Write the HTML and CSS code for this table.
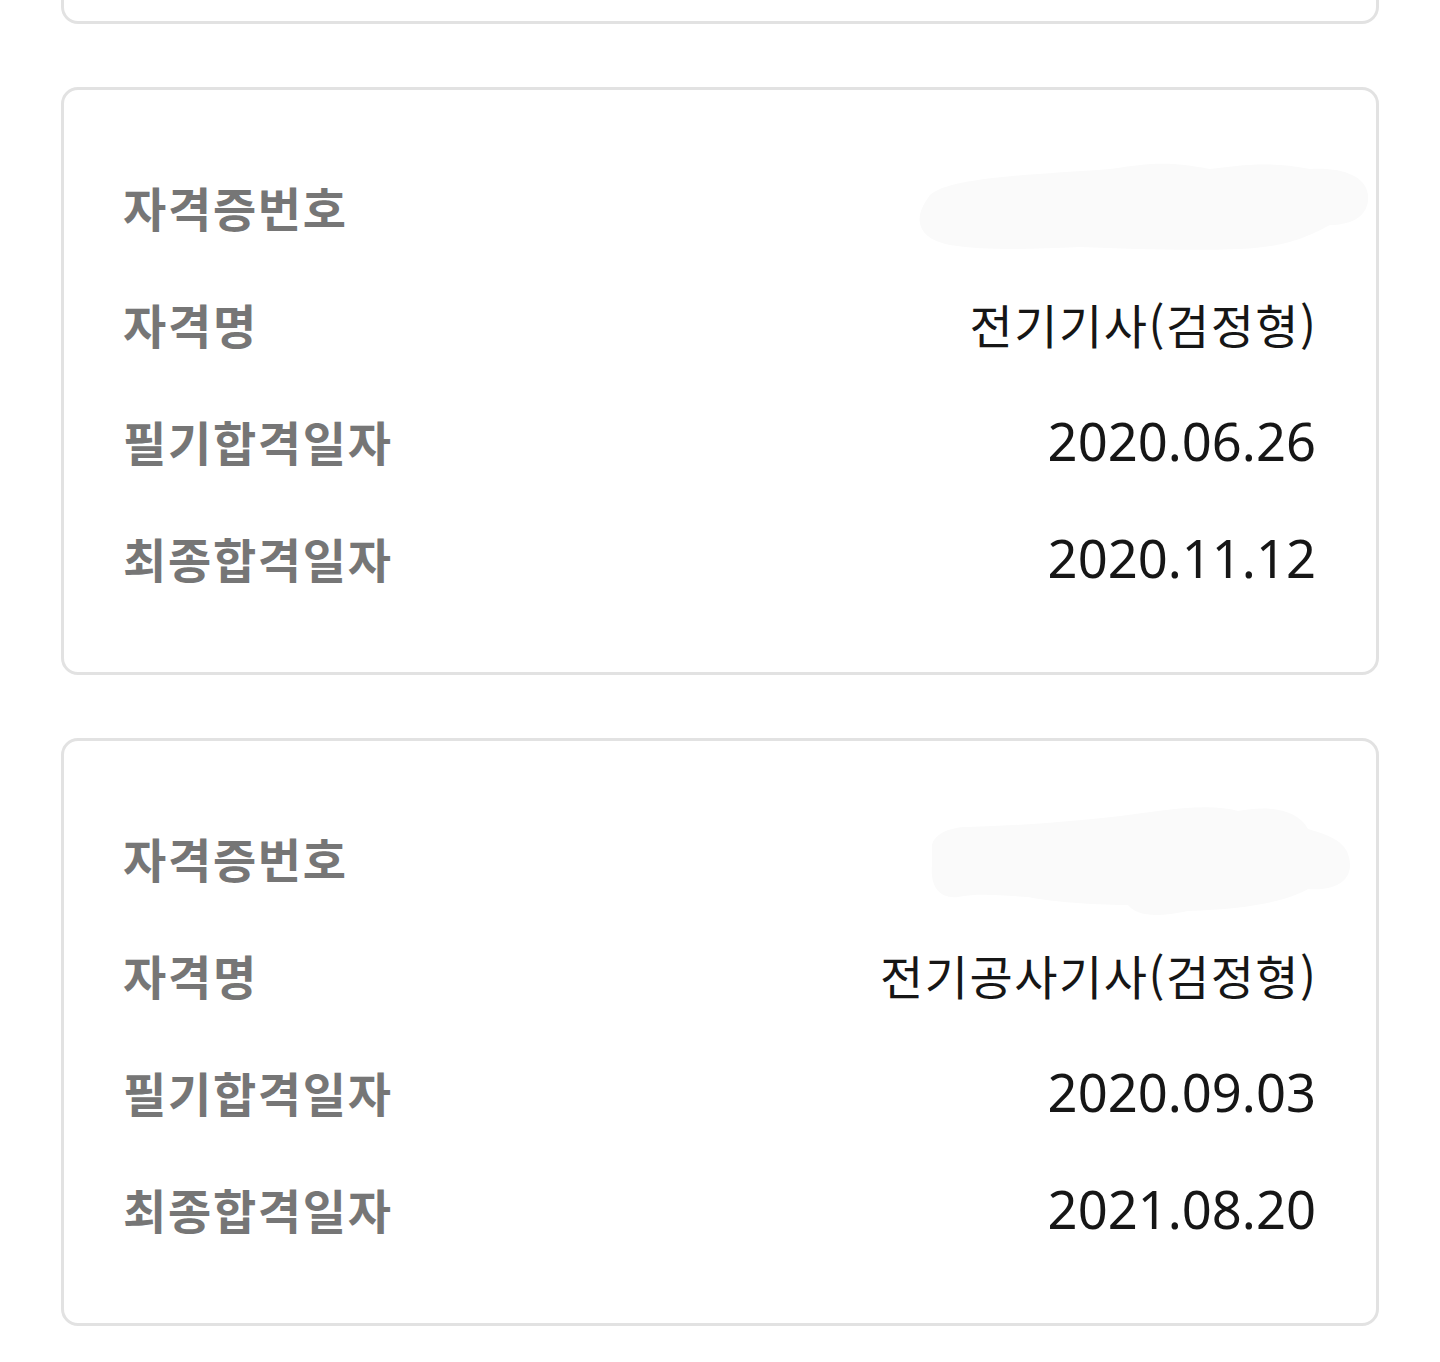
FILE: index.html
```html
<!DOCTYPE html>
<html lang="ko">
<head>
<meta charset="utf-8">
<title>자격증 목록</title>
<link rel="stylesheet" href="styles.css">
</head>
<body>
<div class="list">
  <div class="card partial"></div>

  <div class="card">
    <svg class="smudge smudge-a" viewBox="0 0 460 100" aria-hidden="true">
      <path d="M20 40 C40 22 120 20 200 14 C240 8 260 6 300 14 C330 10 360 6 400 14 C430 12 456 20 458 40 C460 62 440 70 420 70 C400 80 380 92 330 94 C280 96 220 94 170 92 C120 94 80 96 40 90 C10 84 0 66 20 40 Z" fill="#fafafa"/>
    </svg>
    <div class="row"><span class="label">자격증번호</span><span class="value"></span></div>
    <div class="row"><span class="label">자격명</span><span class="value name">전기기사(검정형)</span></div>
    <div class="row"><span class="label">필기합격일자</span><span class="value">2020.06.26</span></div>
    <div class="row"><span class="label">최종합격일자</span><span class="value">2020.11.12</span></div>
  </div>

  <div class="card">
    <svg class="smudge smudge-b" viewBox="0 0 424 112" aria-hidden="true">
      <path d="M4 40 C6 30 20 22 40 22 C100 20 160 16 230 6 C260 2 290 0 310 6 C340 0 370 4 380 24 C400 30 422 36 422 60 C422 80 400 86 380 84 C360 96 320 104 260 106 C230 112 210 112 200 100 C160 100 120 96 100 92 C70 90 50 88 30 92 C10 94 2 80 4 60 Z" fill="#fafafa"/>
    </svg>
    <div class="row"><span class="label">자격증번호</span><span class="value"></span></div>
    <div class="row"><span class="label">자격명</span><span class="value name">전기공사기사(검정형)</span></div>
    <div class="row"><span class="label">필기합격일자</span><span class="value">2020.09.03</span></div>
    <div class="row"><span class="label">최종합격일자</span><span class="value">2021.08.20</span></div>
  </div>
</div>
</body>
</html>
```

FILE: styles.css
```css
html, body {
  margin: 0;
  padding: 0;
  background: #ffffff;
}

body {
  font-family: "Noto Sans", "Noto Sans CJK KR", sans-serif;
}

.list {
  display: flex;
  flex-direction: column;
  gap: 63px;
  padding: 0 61px 0 61px;
  width: 1318px;
}

.card {
  position: relative;
  box-sizing: border-box;
  border: 3px solid #e2e2e2;
  border-radius: 17px;
  padding: 58px 60px 56px 59px;
  background: #ffffff;
}

.card.partial {
  height: 24px;
  padding: 0;
  border-top-width: 0;
  border-radius: 0 0 17px 17px;
}

.row {
  height: 117px;
  display: flex;
  align-items: center;
  justify-content: space-between;
  position: relative;
}

.label {
  font-family: "Noto Sans CJK KR", sans-serif;
  font-weight: 700;
  font-size: 47px;
  letter-spacing: 1.7px;
  color: #767676;
}

.value {
  font-family: "Noto Sans", "Noto Sans CJK KR", sans-serif;
  font-size: 52.5px;
  color: #161616;
  letter-spacing: 0;
}

.value.name {
  font-family: "Noto Sans CJK KR", sans-serif;
  font-size: 47px;
  letter-spacing: 1.5px;
  margin-right: -1.5px;
}

.smudge {
  position: absolute;
  z-index: 1;
}

.smudge-a {
  left: 846px;
  top: 65px;
  width: 460px;
  height: 100px;
}

.smudge-b {
  left: 864px;
  top: 64px;
  width: 424px;
  height: 112px;
}
```
